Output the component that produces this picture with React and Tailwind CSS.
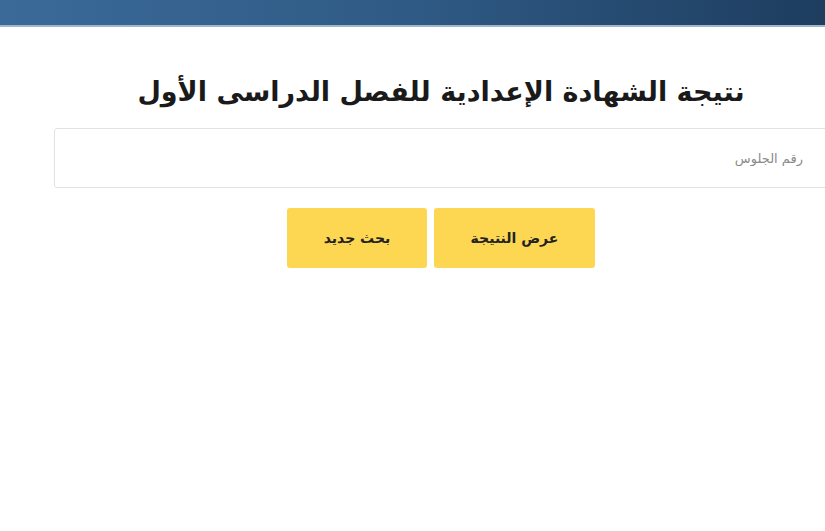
export default function App() {
    return (
        <div className="min-h-[531px] w-full bg-white" style={{ fontFamily: '"DejaVu Sans", "Noto Sans", sans-serif' }}>
            {/* الشريط العلوي */}
            <div className="h-[27px] w-full bg-gradient-to-r from-[#3b6a99] via-[#2f5a85] to-[#1e3d5f] border-b-2 border-[#9fb6cc]" />

            <div dir="rtl" className="ml-[54px] w-[774px] flex flex-col items-center">
                <h1 className="mt-[44px] h-[42px] text-[27px] font-bold text-[#1a1a1a] leading-[42px]">
                    نتيجة الشهادة الإعدادية للفصل الدراسى الأول
                </h1>

                <input
                    type="text"
                    placeholder="رقم الجلوس"
                    className="mt-[15px] h-[60px] w-full rounded-[3px] border border-[#e2e2e2] bg-white px-[24px] text-[13px] text-[#555] placeholder:text-[#8a8a8a] outline-none"
                />

                {/* الأزرار */}
                <div className="mt-[20px] flex gap-[7px]">
                    <button className="h-[60px] w-[161px] rounded-[3px] bg-[#fdd652] text-[14px] font-bold text-[#222]">
                        عرض النتيجة
                    </button>
                    <button className="h-[60px] w-[140px] rounded-[3px] bg-[#fdd652] text-[14px] font-bold text-[#222]">
                        بحث جديد
                    </button>
                </div>
            </div>
        </div>
    );
}
